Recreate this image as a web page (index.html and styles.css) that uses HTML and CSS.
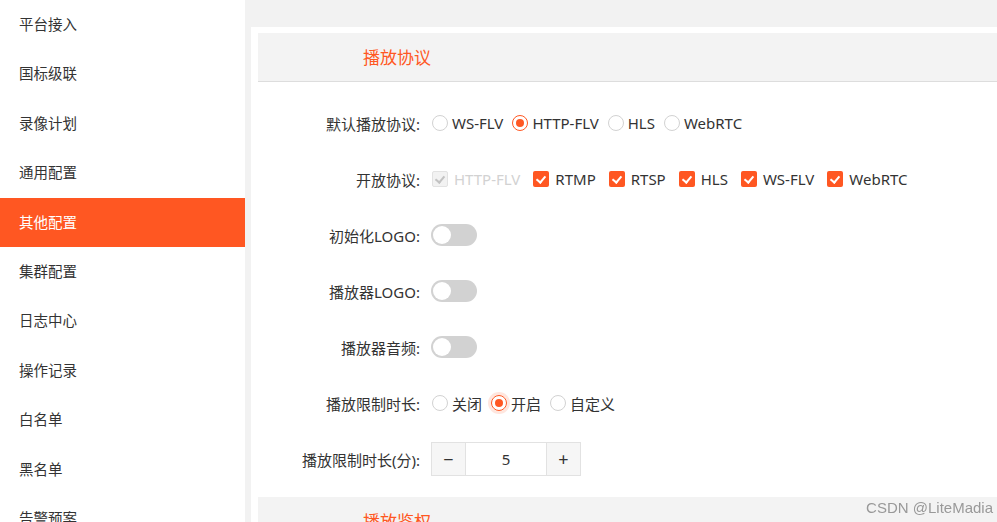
FILE: index.html
```html
<!DOCTYPE html>
<html lang="zh-CN">
<head>
<meta charset="UTF-8">
<title>其他配置</title>
<link rel="stylesheet" href="styles.css">
</head>
<body>
<div class="layout">
    <!-- 左侧菜单 -->
    <ul class="side-menu">
        <li>平台接入</li>
        <li>国标级联</li>
        <li>录像计划</li>
        <li>通用配置</li>
        <li class="active">其他配置</li>
        <li>集群配置</li>
        <li>日志中心</li>
        <li>操作记录</li>
        <li>白名单</li>
        <li>黑名单</li>
        <li>告警预案</li>
    </ul>

    <div class="main">
        <div class="panel">
            <div class="section-title">播放协议</div>
            <div class="form">
                <div class="form-row">
                    <label class="form-label">默认播放协议:</label>
                    <div class="form-field">
                        <span class="radio"><i></i>WS-FLV</span>
                        <span class="radio checked"><i></i>HTTP-FLV</span>
                        <span class="radio"><i></i>HLS</span>
                        <span class="radio"><i></i>WebRTC</span>
                    </div>
                </div>
                <div class="form-row">
                    <label class="form-label">开放协议:</label>
                    <div class="form-field">
                        <span class="checkbox disabled"><i></i>HTTP-FLV</span>
                        <span class="checkbox"><i></i>RTMP</span>
                        <span class="checkbox"><i></i>RTSP</span>
                        <span class="checkbox"><i></i>HLS</span>
                        <span class="checkbox"><i></i>WS-FLV</span>
                        <span class="checkbox"><i></i>WebRTC</span>
                    </div>
                </div>
                <div class="form-row">
                    <label class="form-label">初始化LOGO:</label>
                    <div class="form-field"><span class="switch"></span></div>
                </div>
                <div class="form-row">
                    <label class="form-label">播放器LOGO:</label>
                    <div class="form-field"><span class="switch"></span></div>
                </div>
                <div class="form-row">
                    <label class="form-label">播放器音频:</label>
                    <div class="form-field"><span class="switch"></span></div>
                </div>
                <div class="form-row">
                    <label class="form-label">播放限制时长:</label>
                    <div class="form-field">
                        <span class="radio"><i></i>关闭</span>
                        <span class="radio checked focus"><i></i>开启</span>
                        <span class="radio"><i></i>自定义</span>
                    </div>
                </div>
                <div class="form-row">
                    <label class="form-label">播放限制时长(分):</label>
                    <div class="form-field">
                        <div class="number">
                            <button class="num-btn">&minus;</button>
                            <input class="num-input" type="text" value="5">
                            <button class="num-btn">+</button>
                        </div>
                    </div>
                </div>
            </div>
            <div class="section-title">播放鉴权</div>
        </div>
    </div>
</div>
<div class="watermark">CSDN @LiteMadia</div>
</body>
</html>
```

FILE: styles.css
```css
/* 其他配置页面 */
* {
    box-sizing: border-box;
}

html, body {
    margin: 0;
    height: 100%;
    overflow: hidden;
}

body {
    font-family: "Noto Sans", "Noto Sans CJK SC", sans-serif;
    font-size: 14px;
    color: #333;
    background-color: #f2f2f2;
}

.layout {
    display: flex;
    height: 100%;
}

/* 菜单 */
.side-menu {
    width: 245px;
    flex-shrink: 0;
    margin: 0;
    padding: 0;
    list-style: none;
    background-color: #fff;
}

.side-menu li {
    height: 49.4px;
    line-height: 49.4px;
    padding-left: 19px;
    font-size: 14.5px;
    color: #333;
    cursor: pointer;
}

.side-menu li.active {
    background-color: #ff5722;
    color: #fff;
}

/* 主区域 */
.main {
    flex: 1;
    padding: 27px 0 0 6px;
}

.panel {
    height: 100%;
    background-color: #fff;
    padding: 6px 0 0 7px;
}

.section-title {
    height: 49px;
    line-height: 50px;
    padding-left: 105px;
    font-size: 17px;
    color: #ff5722;
    background-color: #f3f3f3;
    border-bottom: 1px solid #ddd;
}

.form {
    padding: 13px 0 10px;
    font-size: 15px;
}

.form-row {
    display: flex;
    align-items: center;
    height: 56px;
}

.form-label {
    width: 162px;
    text-align: right;
    margin-right: 11px;
    color: #333;
}

.form-field {
    display: flex;
    align-items: center;
}

/* 单选 */
.radio {
    display: inline-flex;
    align-items: center;
    margin-right: 8px;
    cursor: pointer;
}

.radio i {
    width: 16px;
    height: 16px;
    margin: 0 4px 0 1px;
    border: 1px solid #d2d2d2;
    border-radius: 50%;
    position: relative;
}

.radio.checked i {
    border-color: #ff5722;
}

.radio.checked i::after {
    content: "";
    position: absolute;
    left: 3px;
    top: 3px;
    width: 8px;
    height: 8px;
    border-radius: 50%;
    background-color: #ff5722;
}

.radio.focus i {
    box-shadow: 0 0 0 3px rgba(255, 87, 34, 0.15);
}

/* 复选 */
.checkbox {
    display: inline-flex;
    align-items: center;
    margin-right: 12px;
    cursor: pointer;
}

.checkbox i {
    width: 16px;
    height: 16px;
    margin: 0 6px 0 1px;
    border-radius: 2px;
    background-color: #ff5722;
    position: relative;
}

.checkbox i::after {
    content: "";
    position: absolute;
    left: 5px;
    top: 3px;
    width: 4px;
    height: 7px;
    border: solid #fff;
    border-width: 0 2px 2px 0;
    transform: rotate(40deg);
}

.checkbox.disabled {
    color: #d2d2d2;
    cursor: not-allowed;
}

.checkbox.disabled i {
    background-color: #f2f2f2;
    border: 1px solid #e2e2e2;
}

.checkbox.disabled i::after {
    left: 4px;
    top: 2px;
    border-color: #c2c2c2;
}

/* 开关 */
.switch {
    display: inline-block;
    width: 46px;
    height: 22px;
    border-radius: 11px;
    background-color: #d2d2d2;
    position: relative;
}

.switch::after {
    content: "";
    position: absolute;
    left: 2px;
    top: 2px;
    width: 18px;
    height: 18px;
    border-radius: 50%;
    background-color: #fff;
}

/* 数字输入 */
.number {
    display: flex;
    height: 34px;
    border: 1px solid #e2e2e2;
}

.num-btn {
    width: 33px;
    border: 0;
    padding: 0;
    background-color: #f6f6f6;
    font-family: inherit;
    font-size: 18px;
    color: #333;
}

.num-input {
    width: 82px;
    border: 0;
    border-left: 1px solid #e2e2e2;
    border-right: 1px solid #e2e2e2;
    text-align: center;
    font-family: inherit;
    font-size: 15px;
    color: #333;
}

.watermark {
    position: fixed;
    right: 4px;
    bottom: 6px;
    font-family: "Liberation Sans", sans-serif;
    font-size: 15px;
    color: #999;
}
```
